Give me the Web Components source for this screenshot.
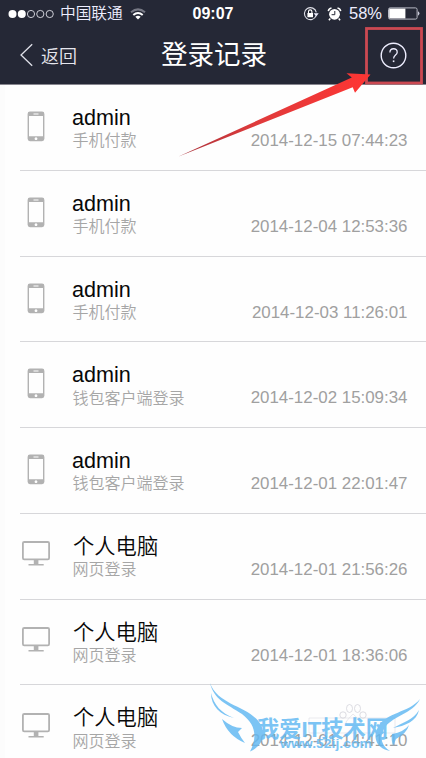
<!DOCTYPE html>
<html lang="zh-CN"><head><meta charset="utf-8"><title>登录记录</title>
<style>
html,body{margin:0;width:426px;height:758px;overflow:hidden;background:#fefefe}
body{font-family:"Liberation Sans","Noto Sans CJK SC",sans-serif}
</style></head><body>
<login-screen></login-screen>
<script>
const define=(name,html)=>customElements.define(name,class extends HTMLElement{
  constructor(){super();this.attachShadow({mode:'open'}).innerHTML=typeof html==='function'?html(this):html;}
});

define('status-bar',`<style>
:host{display:grid;grid-template-columns:192px 1fr auto;height:26px;padding:0 6px 0 8px;box-sizing:border-box;color:#eef;align-items:center}
div{display:flex;align-items:center}
svg{display:block;flex:none}
.carrier{font-size:15.7px;font-weight:350;margin-left:6px;line-height:26px;padding-top:1px;white-space:nowrap}
.time{font-size:16px;font-weight:bold;color:#fff;margin-left:-7.500px}
.pct{font-size:16.5px;margin:0 6px 0 7px}
</style>
<div><svg width="46" height="12" viewBox="0 0 46 12"><g fill="#fff"><circle cx="4.5" cy="6" r="4"/><circle cx="13.8" cy="6" r="4"/></g><g fill="none" stroke="#dfe0e8" stroke-width=".9"><circle cx="23" cy="6" r="3.6"/><circle cx="32.3" cy="6" r="3.6"/><circle cx="41.7" cy="6" r="3.6"/></g></svg>
<span class="carrier">中国联通</span>
<svg style="margin-left:7px" width="16" height="14" viewBox="0 0 16 14" fill="none" stroke-width="2"><path d="M1 5.2Q8-.5 15 5.2" stroke="#777985"/><path d="M3.3 8Q8 4 12.7 8" stroke="#fff"/><path d="M5.3 9.8Q8 7.8 10.7 9.8L8 12.6Z" fill="#fff" stroke="none"/></svg></div>
<div><span class="time">09:07</span></div>
<div><svg width="16" height="16" viewBox="0 0 16 16"><path d="M13.1 9.6A6 6 0 1 1 13.3 6.4" fill="none" stroke="#dfe0e8" stroke-width="1.1"/><path d="M10.7 7.2h5l-2.5 3.2z" fill="#eef"/><rect x="4.4" y="7" width="5.6" height="4.2" fill="#fff"/><path d="M5.5 7V5.6a1.7 1.7 0 0 1 3.4 0V7" fill="none" stroke="#fff" stroke-width="1.1"/></svg>
<svg style="margin-left:8px" width="15" height="16" viewBox="0 0 15 16"><circle cx="7.5" cy="8.3" r="5.4" fill="#fff"/><path d="M7.8 5v3.7H4.6" fill="none" stroke="#252836"/><path d="M1.3 5.2Q1.8 2.4 4.5 2M13.7 5.2Q13.2 2.4 10.5 2M3.3 12.5l-1.4 1.7M11.7 12.5l1.4 1.7" fill="none" stroke="#fff" stroke-width="1.5"/></svg>
<span class="pct">58%</span>
<svg width="32" height="13" viewBox="0 0 32 13"><rect x=".5" y=".9" width="28.6" height="11.2" rx="1.6" fill="none" stroke="#b9bbc5"/><rect x="1.200" y="1.600" width="16.200" height="9.800" fill="#fff"/><path d="M30.2 4.3q2.4 2.1 0 4.4z" fill="#eef"/></svg></div>`);

define('nav-bar',`<style>
:host{display:grid;grid-template-columns:110px 1fr 110px;height:58px;align-items:center;color:#fff}
.back{display:flex;align-items:center;gap:8px;padding-left:20px;font-size:18px;font-weight:350;color:#e5e6ed}
h1{font-size:26.5px;font-weight:400;line-height:40px;margin:0;text-align:center;padding:0 0 1px 2px;white-space:nowrap}
.help{justify-self:end;margin-right:19px}svg{display:block}
</style><div class="back"><svg width="13" height="24" viewBox="0 0 13 24"><path d="M12.2 1.2L1 12l11.2 10.8" fill="none" stroke="#dfe0e8" stroke-width="1.3"/></svg><span>返回</span></div><h1>登录记录</h1>
<svg class="help" width="27" height="27" viewBox="0 0 27 27" fill="none" stroke="#eef"><circle cx="13.5" cy="13.5" r="12.3" stroke-width="1.4"/><path d="M9.9 10.6C9.9 5.5 17.4 5.6 17.2 10.2C17.1 13.2 13.6 13 13.6 16.6" stroke-width="1.3"/><path d="M13.6 18.4v1.7" stroke-width="1.6"/></svg>`);

const phone=`<svg width="18" height="31" viewBox="0 0 18 31"><path fill="#b2b2b2" fill-rule="evenodd" d="M3 .5h12q2.4 0 2.4 2.4v24.9q0 2.4-2.4 2.4H3Q.6 30.200.6 27.800V2.900Q.6.5 3 .5zM2 5v20.300h14V5zM6.500 2.400v1h5v-1zM9 26.300a1.400 1.400 0 1 0 .01 0z"/></svg>`;
const monitor=`<svg style="margin-top:1.500px" width="28" height="26" viewBox="0 0 28 26"><rect x=".9" y="1" width="26.200" height="17.400" rx="1.300" fill="none" stroke="#b2b2b2" stroke-width="1.800"/><path d="M11.800 19h4.600v4h5.300v1.600H6.500V23h5.300z" fill="#b2b2b2"/></svg>`;

define('login-record',el=>`<style>
:host{display:grid;grid-template-columns:73px 1fr auto;height:85.75px;box-sizing:border-box;padding-right:18.5px;background:linear-gradient(#d7d7da,#d7d7da) 20px 100%/406px 1px no-repeat}
.icon{display:flex;justify-content:center;width:72px;padding-top:26px}
.name{font-size:21.6px;line-height:28px;color:#080808;padding-top:19px;margin-left:-1px}
.cjk{font-size:21.300px;font-weight:350;margin-left:0}
.type{font-size:16px;font-weight:350;line-height:20px;color:#a6a6a6;margin:-.6px 0 0 -.6px}
.time{font-size:16.900px;line-height:20px;color:#a0a0a0;padding-top:46px;white-space:nowrap}
</style><div class="icon">${el.getAttribute('device')==='phone'?phone:monitor}</div>
<div><div class="name ${el.getAttribute('device')==='phone'?'':'cjk'}"><slot></slot></div><div class="type"><slot name="type"></slot></div></div>
<div class="time"><slot name="time"></slot></div>`);

define('help-callout',`<style>:host{position:absolute;left:0;top:0;pointer-events:none}svg{display:block}</style>
<svg width="426" height="170" viewBox="0 0 426 170"><defs><linearGradient id="g"><stop stop-color="#a8323b"/><stop offset=".4" stop-color="#df3b3c"/><stop offset="1" stop-color="#ff3533"/></linearGradient></defs>
<rect x="366.500" y="28.500" width="55" height="54.500" fill="none" stroke="#cc4952" stroke-width="2.800"/>
<path d="M178 156.800L351.800 77.400 346.500 73.200 370.500 74.500 355 92.800 352.700 87.200Z" fill="url(#g)"/></svg>`);

define('site-watermark',`<style>:host{position:absolute;left:204px;top:678px;pointer-events:none}svg{display:block}text{font-family:"Liberation Sans","Noto Sans CJK SC",sans-serif;font-weight:bold}</style>
<svg width="222" height="80" viewBox="0 0 222 80">
<g fill="none" stroke="#d3d3db" stroke-width=".8"><circle cx="139" cy="37" r="3.200"/><ellipse cx="145.500" cy="30.500" rx="3" ry="4"/><ellipse cx="153.500" cy="30.500" rx="3" ry="4"/><circle cx="159" cy="37" r="3.200"/><path d="M149 36q-5 5-7 8 0 5 7 3 7 2 7-3-3-5-7-8zM105 40h86v15h-86z" opacity=".6"/></g>
<g fill="#62b9f3" opacity=".83">
<path d="M6 5C14 28 47 28 57 47C63 60 55 70 46 73.500C54 58 51 46 38 36C23 26 10 22 6 5Z"/><path d="M7 15C10 27 17 35 30 40C16 37 7 28 7 15Z"/><path d="M18 41Q28 50 38 50L34 54Q37 60 41 65Q24 58 18 41Z"/>
<path d="M216 21C209 36 187 38 180 51C175 60 178 68 186 73C171 70 169 58 174 49C182 34 205 35 216 21Z"/><path d="M215 32C213 43 201 48 189 50C200 44 209 42 215 32Z"/><path d="M205 47Q203 55 192 61L189 68Q187 61 188 56Q200 54 205 47Z"/>
<text x="53" y="58.500" font-size="22.500" textLength="131" lengthAdjust="spacingAndGlyphs">我爱IT技术网</text>
<text x="76" y="69.500" font-size="12.500" textLength="92" lengthAdjust="spacingAndGlyphs">www.52ij.com</text>
</g></svg>`);

const rows=[
['phone','admin','手机付款','2014-12-15 07:44:23'],['phone','admin','手机付款','2014-12-04 12:53:36'],['phone','admin','手机付款','2014-12-03 11:26:01'],
['phone','admin','钱包客户端登录','2014-12-02 15:09:34'],['phone','admin','钱包客户端登录','2014-12-01 22:01:47'],
['pc','个人电脑','网页登录','2014-12-01 21:56:26'],['pc','个人电脑','网页登录','2014-12-01 18:36:06'],['pc','个人电脑','网页登录','2014-12-01 14:41:10']];
define('login-screen',`<style>:host{display:block;position:relative;width:426px;height:758px;overflow:hidden}
header{background:#252836;height:85px;border-bottom:1px solid #87868f;box-sizing:border-box}main{display:block;box-shadow:inset 5px 0 #fcfcfc}</style>
<header><status-bar></status-bar><nav-bar></nav-bar></header><main>${rows.map(r=>`<login-record device="${r[0]}">${r[1]}<span slot="type">${r[2]}</span><span slot="time">${r[3]}</span></login-record>`).join('')}</main><help-callout></help-callout><site-watermark></site-watermark>`);
</script></body></html>
